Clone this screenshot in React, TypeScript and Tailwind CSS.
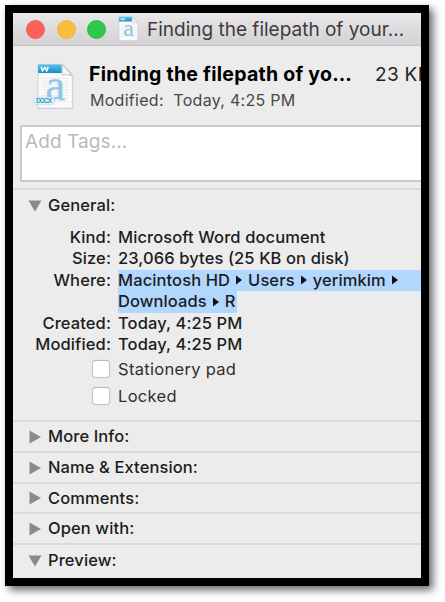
import React from "react";

function DocIcon({ badge, className }: { badge?: boolean; className: string }) {
  return (
    <svg viewBox="0 0 42 50" className={"overflow-visible " + className} aria-hidden="true">
      <defs>
        <linearGradient id="band" x1="0" x2="0" y1="0" y2="1">
          <stop offset="0" stopColor="#59c3ec" />
          <stop offset="1" stopColor="#1b8bc0" />
        </linearGradient>
      </defs>
      <path d="M3.500 2H31l9.500 11v35H3.500z" fill="#b5b5b5" opacity=".55" />
      <path d="M4 1.500H30L39.500 13V47H4z" fill="#fbfbfb" stroke="#cfd2d4" strokeWidth=".8" />
      <path d="M7 16H36M7 19H36M7 22H36M7 25H36M7 28H36M7 31H36M7 34H36M7 37H36M7 40H36" stroke="#e6e9eb" strokeWidth="1" />
      <path d="M4 1.500H28.500V10.500H4z" fill="url(#band)" />
      <path d="M29 1.500L39.500 13Q33 11.500 29 12.500Z" fill="#f5f5f5" stroke="#aeb1b3" strokeWidth=".8" />
      <path d="M7 4l1.500 4L11 4.500L13 8L14.500 4" fill="none" stroke="#fff" strokeWidth="1.600" />
      <text x="22" y="38.500" textAnchor="middle" fontSize="46" fill="#93c6e7" stroke="#93c6e7" strokeWidth=".4" fontFamily="'Liberation Serif', serif">a</text>
      {badge && (
        <g>
          <rect x="-1" y="35.500" width="22.500" height="8" rx="4" fill="#e0f3fb" stroke="#b4d8e8" strokeWidth=".6" />
          <text x="10.300" y="42" textAnchor="middle" textLength="17" fontSize="7" fontWeight="600" fill="#3791b5" fontFamily="Inter, sans-serif">DOCX</text>
        </g>
      )}
    </svg>
  );
}

function Triangle({ open }: { open?: boolean }) {
  return (
    <svg viewBox="0 0 14 14" className="h-[14px] w-[14px] shrink-0" aria-hidden="true">
      <path d={open ? "M.5 1.500H13.500L7 12.500Z" : "M1.500 .5V13.500L13 7Z"} fill="#8a8a8a" />
    </svg>
  );
}

function Arrow() {
  return (
    <svg viewBox="0 0 6 10" className="mx-[6px] inline-block h-[10px] w-[6px] align-[0.500px]" aria-hidden="true">
      <path d="M0 0.500L6 5L0 9.500Z" fill="#111" />
    </svg>
  );
}

function Row({ label, children }: { label: string; children: React.ReactNode }) {
  return (
    <div className="flex h-[21.400px]">
      <div className="mr-[7px] w-[98px] shrink-0 text-right">{label}</div>
      <div className="flex-1">{children}</div>
    </div>
  );
}

function Check({ children, className }: { children: string; className: string }) {
  return (
    <div className={"flex items-center pl-[79px] " + className}>
      <span className="mr-[8px] h-[18px] w-[18px] rounded-[4px] border border-[#c6c6c6] border-t-[#b8b8b8] bg-white shadow-[0_0_1px_#bbb]" />
      <span className="font-normal tracking-[0.300px] text-[#303030]">{children}</span>
    </div>
  );
}

function Section({ title, open, className }: { title: string; open?: boolean; className: string }) {
  return (
    <div className={"flex items-center border-t-2 border-[#d9d9d9] pl-[15px] " + className}>
      <Triangle open={open} />
      <span className="ml-[6px]">{title}</span>
    </div>
  );
}

export default function App() {
  return (
    <div className="h-[602px] w-[445px] overflow-hidden bg-white pt-[5px] pl-[5px] font-[Inter,'Liberation_Sans',sans-serif] text-[16.500px] leading-[21.400px] font-medium tracking-[0.100px] whitespace-nowrap text-[#1c1c1c]">
      <div className="flex h-[581px] w-[423.500px] flex-col overflow-hidden border-8 border-black bg-[#ececec] shadow-[4px_4px_8px_rgba(0,0,0,0.600)]">
        <header className="flex h-[33px] shrink-0 items-center border-b border-[#c4c2c4] bg-linear-to-b from-[#e9e7e9] to-[#d3d1d3] pl-[13px]">
          <span className="h-[19px] w-[19px] rounded-full border border-[#f25b57] bg-[#fc605c]" />
          <span className="ml-[12px] h-[19px] w-[19px] rounded-full border border-[#f2b53c] bg-[#fdbc40]" />
          <span className="ml-[11px] h-[19px] w-[19px] rounded-full border border-[#2bbb44] bg-[#2fc84a]" />
          <DocIcon className="ml-[11px] h-[26px] w-[22px]" />
          <span className="mt-[2px] ml-[8px] text-[19px] font-normal tracking-[0px] text-[#3d3b3d]">Finding the filepath of your…</span>
        </header>

        <div className="flex h-[79px] shrink-0 pt-[17px] pl-[21px]">
          <DocIcon badge className="h-[48px] w-[41px] shrink-0" />
          <div className="ml-[14px]">
            <div className="mt-[1px] flex">
              <span className="w-[286px] text-[19.500px] font-bold tracking-[0.250px] text-black">Finding the filepath of yo…</span>
              <span className="text-[19px] font-normal tracking-[0.300px] text-[#222]">23 KB</span>
            </div>
            <div className="mt-[5px] pl-[1px] text-[16px] font-normal tracking-[0.280px] text-[#484848]">Modified: &nbsp;Today, 4:25 PM</div>
          </div>
        </div>

        <div className="ml-[7px] h-[57px] shrink-0 border-2 border-r-0 border-[#cbcbcb] bg-white pt-[4px] pl-[3px] text-[19px] font-normal text-[#bababa]">Add Tags…</div>

        <Section title="General:" open className="mt-[6px] h-[34px] shrink-0" />
        <div className="mt-[5px] shrink-0">
          <Row label="Kind:">Microsoft Word document</Row>
          <Row label="Size:">23,066 bytes (25 KB on disk)</Row>
          <div className="flex h-[42.800px]">
            <div className="mr-[7px] w-[98px] shrink-0 text-right">Where:</div>
            <div className="flex-1">
              <div className="h-[21.400px] bg-[#b2d7ff]">Macintosh HD<Arrow />Users<Arrow />yerimkim<Arrow /></div>
              <div className="h-[21.400px] w-[119px] bg-[#b2d7ff]">Downloads<Arrow />R</div>
            </div>
          </div>
          <Row label="Created:">Today, 4:25 PM</Row>
          <Row label="Modified:">Today, 4:25 PM</Row>
        </div>
        <Check className="mt-[4px] h-[20px] shrink-0">Stationery pad</Check>
        <Check className="mt-[7px] h-[20px] shrink-0">Locked</Check>

        <div className="mt-[14px] flex flex-col">
          <Section title="More Info:" className="h-[31px]" />
          <Section title="Name & Extension:" className="h-[31px]" />
          <Section title="Comments:" className="h-[30px]" />
          <Section title="Open with:" className="h-[31px]" />
          <Section title="Preview:" open className="h-[33px]" />
        </div>
      </div>
    </div>
  );
}
